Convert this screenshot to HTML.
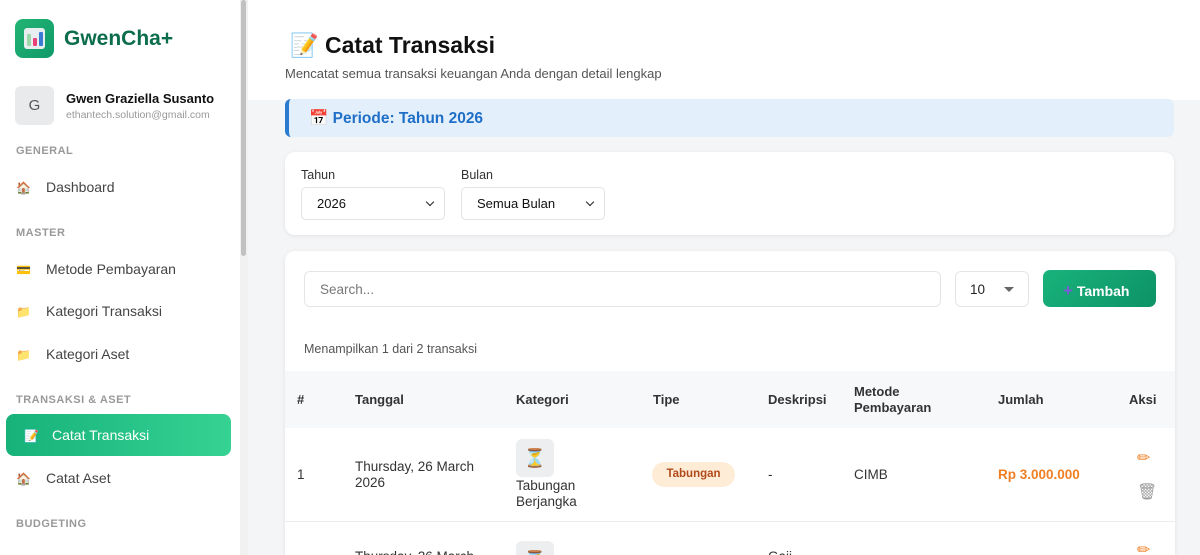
<!DOCTYPE html>
<html style="width:1200px;height:555px;overflow:hidden"><head><meta charset="utf-8"><style>
*{box-sizing:border-box;margin:0;padding:0}
body{width:1200px;height:555px;overflow:hidden;font-family:"Liberation Sans","Noto Sans CJK SC",sans-serif;background:#f4f5f6;position:relative;color:#222}
.sb{position:absolute;left:0;top:0;width:240px;height:555px;background:#fff}
.scroll{position:absolute;left:240px;top:0;width:8px;height:555px;background:#f1f1f1}
.scroll i{position:absolute;left:1px;top:0;width:5px;height:256px;background:#c1c1c1;border-radius:3px}
.logo{position:absolute;left:15px;top:19px;width:39px;height:39px;border-radius:8px;background:linear-gradient(135deg,#22b573,#10996a)}
.logo b{position:absolute;left:9px;top:9px;width:21px;height:21px;background:#e8eef0;border-radius:3px}
.logo b i{position:absolute;bottom:3px;width:4px;border-radius:1px}
.brand{position:absolute;left:64px;top:27px;font-size:21px;font-weight:bold;color:#0c6d4c}
.av{position:absolute;left:15px;top:86px;width:39px;height:39px;border-radius:6px;background:#e9eaec;color:#555;font-size:15px;text-align:center;line-height:39px}
.un{position:absolute;left:66px;top:91px;font-size:13px;font-weight:bold;color:#111}
.em{position:absolute;left:66px;top:109px;font-size:10.5px;color:#999}
.sec{position:absolute;left:16px;font-size:11px;font-weight:bold;color:#999;letter-spacing:.5px}
.it{position:absolute;left:16px;font-size:14px;color:#444}
.it span{display:inline-block;width:30px;font-size:12px}
.act{position:absolute;left:6px;top:414px;width:225px;height:42px;border-radius:8px;background:linear-gradient(90deg,#16b27a,#35d293);color:#fff;font-size:14px;padding:13px 0 0 18px}
.act span{display:inline-block;width:28px;font-size:12px}
.hdr{position:absolute;left:248px;top:0;width:952px;height:100px;background:#fff}
h1{position:absolute;left:290px;top:32px;font-size:23px;font-weight:bold;color:#111}
.sub{position:absolute;left:285px;top:66px;font-size:13px;color:#555}
.per{position:absolute;left:285px;top:99px;width:889px;height:38px;background:#e3f0fb;border-left:4px solid #2a7bd0;border-radius:6px;color:#1f6fc8;font-weight:bold;font-size:15.5px;padding:10px 0 0 20px}
.card{position:absolute;background:#fff;border-radius:10px;box-shadow:0 1px 4px rgba(0,0,0,.08)}
.lbl{position:absolute;font-size:12.5px;color:#333}
.sel{position:absolute;height:33px;border:1px solid #e3e3e3;border-radius:5px;background:#fff;font-size:13px;padding:8px 0 0 15px;color:#111}
.sel:after{content:"";position:absolute;right:11px;top:11px;width:5px;height:5px;border-right:1.5px solid #222;border-bottom:1.5px solid #222;transform:rotate(45deg)}
.search{position:absolute;left:304px;top:271px;width:637px;height:36px;border:1px solid #e5e5e5;border-radius:6px;font-size:13.5px;color:#777;padding:10px 15px}
.pp{position:absolute;left:955px;top:271px;width:74px;height:36px;border:1px solid #e5e5e5;border-radius:6px;font-size:13.5px;padding:10px 14px}
.pp:after{content:"";position:absolute;right:14px;top:15px;border:5px solid transparent;border-top-color:#666}
.btn{position:absolute;left:1043px;top:270px;width:113px;height:37px;border-radius:7px;background:linear-gradient(135deg,#19b37c,#0d9266);color:#fff;font-weight:bold;font-size:14px;padding:11px 0 0 20px}
.info{position:absolute;left:304px;top:342px;font-size:12.5px;color:#555}
.th{position:absolute;left:285px;top:371px;width:890px;height:57px;background:#f6f8f9}
.h{position:absolute;font-size:13px;font-weight:bold;color:#333}
.c{position:absolute;font-size:13.5px;color:#333}
.row2{position:absolute;left:285px;top:521px;width:890px;height:1px;background:#ececec}
.ic{position:absolute;width:38px;height:38px;border-radius:6px;background:#eceeef;text-align:center;line-height:38px;font-size:18px}
.tag{position:absolute;left:652px;top:462px;width:83px;height:25px;border-radius:13px;background:#feecd6;color:#b14a1a;font-size:11.5px;font-weight:bold;text-align:center;line-height:25px}
</style></head><body>
<div class="sb">
<div class="logo"><b><i style="left:3px;height:12px;background:#9fd8a8"></i><i style="left:9px;height:8px;background:#e8407a"></i><i style="left:15px;height:14px;background:#3a7bd5"></i></b></div><div class="brand">GwenCha+</div>
<div class="av">G</div><div class="un">Gwen Graziella Susanto</div><div class="em">ethantech.solution@gmail.com</div>
<div class="sec" style="top:145px">GENERAL</div>
<div class="it" style="top:179px"><span>🏠</span>Dashboard</div>
<div class="sec" style="top:227px">MASTER</div>
<div class="it" style="top:261px"><span>💳</span>Metode Pembayaran</div>
<div class="it" style="top:303px"><span>📁</span>Kategori Transaksi</div>
<div class="it" style="top:346px"><span>📁</span>Kategori Aset</div>
<div class="sec" style="top:394px">TRANSAKSI &amp; ASET</div>
<div class="act"><span>📝</span>Catat Transaksi</div>
<div class="it" style="top:470px"><span>🏠</span>Catat Aset</div>
<div class="sec" style="top:518px">BUDGETING</div>
</div>
<div class="scroll"><i></i></div>
<div class="hdr"></div>
<h1>📝 Catat Transaksi</h1>
<div class="sub">Mencatat semua transaksi keuangan Anda dengan detail lengkap</div>
<div class="per">📅 Periode: Tahun 2026</div>
<div class="card" style="left:285px;top:152px;width:889px;height:83px"></div>
<div class="lbl" style="left:301px;top:168px">Tahun</div>
<div class="lbl" style="left:461px;top:168px">Bulan</div>
<div class="sel" style="left:301px;top:187px;width:144px">2026</div>
<div class="sel" style="left:461px;top:187px;width:144px">Semua Bulan</div>
<div class="card" style="left:285px;top:251px;width:890px;height:304px;border-radius:10px 10px 0 0"></div>
<div class="search">Search...</div>
<div class="pp">10</div>
<div class="btn"><span style="color:#7a5ad6;font-size:17px">+</span> Tambah</div>
<div class="info">Menampilkan 1 dari 2 transaksi</div>
<div class="th"></div>
<div class="h" style="left:297px;top:392px">#</div>
<div class="h" style="left:355px;top:392px">Tanggal</div>
<div class="h" style="left:516px;top:392px">Kategori</div>
<div class="h" style="left:653px;top:392px">Tipe</div>
<div class="h" style="left:768px;top:392px">Deskripsi</div>
<div class="h" style="left:854px;top:384px;line-height:16px">Metode<br>Pembayaran</div>
<div class="h" style="left:998px;top:392px">Jumlah</div>
<div class="h" style="left:1129px;top:392px">Aksi</div>
<div class="c" style="left:297px;top:467px">1</div>
<div class="c" style="left:355px;top:459px;line-height:16px">Thursday, 26 March<br>2026</div>
<div class="ic" style="left:516px;top:439px">⏳</div>
<div class="c" style="left:516px;top:478px;line-height:16px">Tabungan<br>Berjangka</div>
<div class="tag">Tabungan</div>
<div class="c" style="left:768px;top:467px">-</div>
<div class="c" style="left:854px;top:467px">CIMB</div>
<div class="c" style="left:998px;top:467px;color:#f07f24;font-weight:bold">Rp 3.000.000</div>
<div class="c" style="left:1137px;top:448px;color:#f07f24;font-size:16px">✏</div>
<div class="c" style="left:1137px;top:482px;color:#999;font-size:16px">🗑</div>
<div class="row2"></div>
<div class="c" style="left:355px;top:549px">Thursday, 26 March</div>
<div class="c" style="left:768px;top:549px">Gaji</div>
<div class="ic" style="left:516px;top:541px">⏳</div>
<div class="c" style="left:1137px;top:540px;color:#f07f24;font-size:16px">✏</div>
</body></html>
